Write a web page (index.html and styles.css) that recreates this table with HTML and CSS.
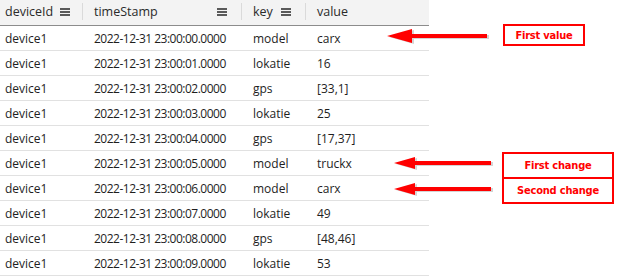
FILE: index.html
```html
<!DOCTYPE html>
<html>
<head>
<meta charset="utf-8">
<link rel="stylesheet" href="styles.css">
</head>
<body>
<div class="stage">
  <div class="grid">
    <div class="row head">
      <div class="cell c1"><span>deviceId</span><span class="menu"></span></div>
      <div class="cell c2"><span>timeStamp</span><span class="menu"></span></div>
      <div class="cell c3"><span>key</span><span class="menu"></span></div>
      <div class="cell c4"><span>value</span></div>
    </div>
    <div class="row"><div class="cell c1">device1</div><div class="cell c2">2022-12-31 23:00:00.0000</div><div class="cell c3">model</div><div class="cell c4">carx</div></div>
    <div class="row"><div class="cell c1">device1</div><div class="cell c2">2022-12-31 23:00:01.0000</div><div class="cell c3">lokatie</div><div class="cell c4">16</div></div>
    <div class="row"><div class="cell c1">device1</div><div class="cell c2">2022-12-31 23:00:02.0000</div><div class="cell c3">gps</div><div class="cell c4">[33,1]</div></div>
    <div class="row"><div class="cell c1">device1</div><div class="cell c2">2022-12-31 23:00:03.0000</div><div class="cell c3">lokatie</div><div class="cell c4">25</div></div>
    <div class="row"><div class="cell c1">device1</div><div class="cell c2">2022-12-31 23:00:04.0000</div><div class="cell c3">gps</div><div class="cell c4">[17,37]</div></div>
    <div class="row"><div class="cell c1">device1</div><div class="cell c2">2022-12-31 23:00:05.0000</div><div class="cell c3">model</div><div class="cell c4">truckx</div></div>
    <div class="row"><div class="cell c1">device1</div><div class="cell c2">2022-12-31 23:00:06.0000</div><div class="cell c3">model</div><div class="cell c4">carx</div></div>
    <div class="row"><div class="cell c1">device1</div><div class="cell c2">2022-12-31 23:00:07.0000</div><div class="cell c3">lokatie</div><div class="cell c4">49</div></div>
    <div class="row"><div class="cell c1">device1</div><div class="cell c2">2022-12-31 23:00:08.0000</div><div class="cell c3">gps</div><div class="cell c4">[48,46]</div></div>
    <div class="row"><div class="cell c1">device1</div><div class="cell c2">2022-12-31 23:00:09.0000</div><div class="cell c3">lokatie</div><div class="cell c4">53</div></div>
  </div>

  <svg class="arrow a1" width="108" height="16" viewBox="0 0 108 16">
    <path d="M3 9 L28 2 L28 7 L103 7 L103 11 L28 11 L28 16 Z" fill="#b8b8b8" opacity="0.6"/>
    <path d="M1 8 L26 1 L26 6 L101 6 L101 10 L26 10 L26 15 Z" fill="#ff0000"/>
  </svg>
  <div class="label l1">First value</div>

  <svg class="arrow a2" width="104" height="16" viewBox="0 0 104 16">
    <path d="M3 9 L24 3 L24 7 L100 7 L100 11 L24 11 L24 15 Z" fill="#b8b8b8" opacity="0.6"/>
    <path d="M1 8 L22 2 L22 6 L98 6 L98 10 L22 10 L22 14 Z" fill="#ff0000"/>
  </svg>
  <svg class="arrow a3" width="104" height="16" viewBox="0 0 104 16">
    <path d="M3 9 L24 3 L24 7 L100 7 L100 11 L24 11 L24 15 Z" fill="#b8b8b8" opacity="0.6"/>
    <path d="M1 8 L22 2 L22 6 L98 6 L98 10 L22 10 L22 14 Z" fill="#ff0000"/>
  </svg>
  <div class="labels">
    <div class="label2">First change</div>
    <div class="label2 second">Second change</div>
  </div>
</div>
</body>
</html>
```
FILE: styles.css
```css
html, body {
  margin: 0;
  padding: 0;
  background: #ffffff;
}
.stage {
  position: relative;
  width: 627px;
  height: 276px;
  font-family: "Open Sans", "Noto Sans", "DejaVu Sans", sans-serif;
  font-size: 12px;
  color: #1e1e1e;
}
.grid {
  width: 429px;
  display: flex;
  flex-direction: column;
}
.row {
  display: grid;
  grid-template-columns: 82px 159px 64px 124px;
  height: 25px;
  border-bottom: 1px solid #e1e1e1;
  box-sizing: border-box;
  background: #fff;
}
.row.head {
  background: #f3f3f3;
  border-bottom: 1px solid #8c8c8c;
  height: 26px;
  font-size: 12.5px;
  color: #2a2a2a;
}
.cell {
  display: flex;
  align-items: center;
  padding-left: 12px;
  white-space: nowrap;
}
.cell.c1 { padding-left: 5px; }
.row .cell.c2 { letter-spacing: -0.5px; }
.head .cell.c2 { letter-spacing: 0; }
.head .cell {
  padding-bottom: 2px;
}
.head .cell.c2, .head .cell.c3, .head .cell.c4 {
  background-image: linear-gradient(#dadada, #dadada);
  background-size: 1px 17px;
  background-position: 0 3px;
  background-repeat: no-repeat;
  padding-left: 12px;
}
.menu {
  width: 10px;
  height: 8px;
  margin-left: auto;
  margin-right: 14px;
  background-image: linear-gradient(#5a5a5a 0 2px, transparent 2px 3px, #5a5a5a 3px 5px, transparent 5px 6px, #5a5a5a 6px 8px);
}
.c1 .menu { margin-left: 7px; margin-right: 0; }
.c2 .menu { margin-right: 14px; }
.c3 .menu { margin-left: 8px; margin-right: 0; }

.arrow {
  position: absolute;
}
.a1 { left: 386px; top: 28px; }
.a2 { left: 393px; top: 155px; }
.a3 { left: 393px; top: 181px; }

.label {
  position: absolute;
  left: 503px;
  top: 24px;
  width: 82px;
  height: 22px;
  box-sizing: border-box;
  border: 2px solid #ff0000;
  color: #ff0000;
  font-family: "DejaVu Sans Condensed", "DejaVu Sans", sans-serif;
  font-weight: bold;
  font-size: 11px;
  letter-spacing: -0.2px;
  display: flex;
  align-items: center;
  justify-content: center;
}
.labels {
  position: absolute;
  left: 502px;
  top: 152px;
  width: 112px;
  box-sizing: border-box;
  border: 2px solid #ff0000;
  display: flex;
  flex-direction: column;
}
.label2 {
  height: 23px;
  color: #ff0000;
  font-family: "DejaVu Sans Condensed", "DejaVu Sans", sans-serif;
  font-weight: bold;
  font-size: 11px;
  letter-spacing: -0.2px;
  display: flex;
  align-items: center;
  justify-content: center;
}
.label2.second {
  border-top: 2px solid #ff0000;
}
```
